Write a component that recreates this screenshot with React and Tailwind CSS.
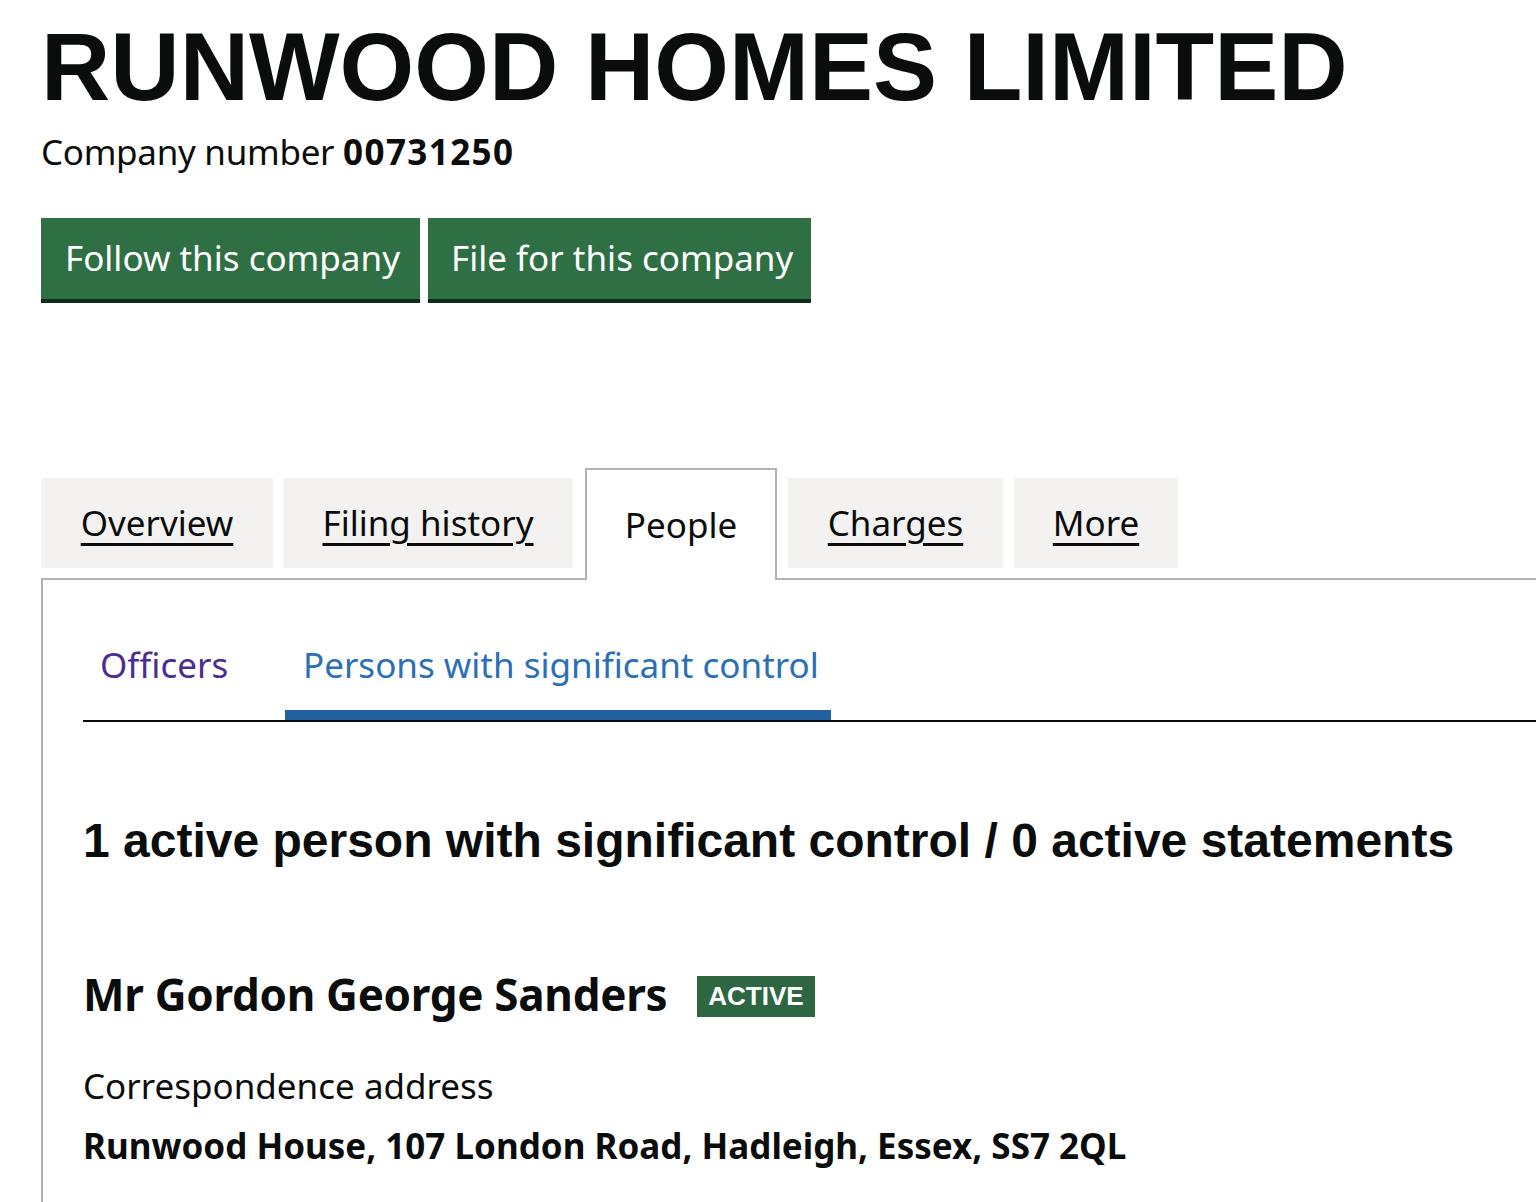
import React from "react";

const body = { fontFamily: '"Noto Sans", sans-serif' };
const arial = { fontFamily: '"Liberation Sans", Arial, sans-serif' };

const tabs = [
  { label: "Overview", w: "w-[232px]", ml: "ml-0" },
  { label: "Filing history", w: "w-[290px]", ml: "ml-[10px]" },
  { label: "People", w: "w-[192px]", ml: "ml-[12px]", active: true },
  { label: "Charges", w: "w-[215px]", ml: "ml-[11px]" },
  { label: "More", w: "w-[164px]", ml: "ml-[11px]" },
];

const Tab = ({ tab }) => {
  if (tab.active) {
    return (
      <div
        className={`relative z-10 -mb-[2px] flex h-[112px] items-center justify-center border-x-2 border-t-2 border-[#b1b4b6] bg-white ${tab.w} ${tab.ml}`}
      >
        <span className="text-[35px] leading-[48px] text-[#0b0c0c]">
          {tab.label}
        </span>
      </div>
    );
  }
  return (
    <div
      className={`mb-[10px] flex h-[90px] items-center justify-center bg-[#f3f2f1] ${tab.w} ${tab.ml}`}
    >
      <a
        href="#"
        className="text-[35px] leading-[48px] text-[#0b0c0c] underline decoration-[3px] underline-offset-[7px]"
      >
        {tab.label}
      </a>
    </div>
  );
};

export default function App() {
  return (
    <div
      className="flex h-[1202px] flex-col overflow-hidden bg-white pl-[41px] text-[#0b0c0c]"
      style={body}
    >
      <h1
        className="mt-[19px] text-[96px] font-bold leading-[96px] whitespace-nowrap"
        style={arial}
      >
        RUNWOOD HOMES LIMITED
      </h1>

      <p className="mt-[13px] text-[35px] leading-[48px] tracking-[-0.3px]">
        Company number{" "}
        <strong className="font-bold tracking-[1.4px]">00731250</strong>
      </p>

      <div className="mt-[42px] flex gap-[8px]">
        <button className="flex h-[81px] w-[379px] items-center pl-[24px] text-[35px] text-white bg-[#2f6f44] shadow-[0_4px_0_#0e2c19]">
          Follow this company
        </button>
        <button className="flex h-[81px] w-[383px] items-center pl-[23px] text-[35px] text-white bg-[#2f6f44] shadow-[0_4px_0_#0e2c19]">
          File for this company
        </button>
      </div>

      <div className="mt-[169px] flex items-end border-b-2 border-[#b1b4b6]">
        {tabs.map((tab) => (
          <Tab key={tab.label} tab={tab} />
        ))}
      </div>

      <div className="flex-1 border-l-2 border-[#b1b4b6] pl-[40px]">
        <div className="mt-[61px] flex border-b-2 border-[#0b0c0c]">
          <div className="w-[202px] pb-[31px] pl-[17px]">
            <a href="#" className="text-[35px] leading-[48px] text-[#4c2c92]">
              Officers
            </a>
          </div>
          <div className="w-[546px] border-b-[10px] border-[#23609f] pb-[21px] pl-[18px]">
            <a href="#" className="text-[35px] leading-[48px] text-[#2b6fb6]">
              Persons with significant control
            </a>
          </div>
        </div>

        <h2
          className="mt-[91px] text-[48px] font-bold leading-[56px] whitespace-nowrap"
          style={arial}
        >
          1 active person with significant control / 0 active statements
        </h2>

        <div className="mt-[97px] flex h-[56px] items-center">
          <h3 className="text-[44px] font-bold leading-[56px] tracking-[-0.3px]">
            Mr Gordon George Sanders
          </h3>
          <span
            className="ml-[30px] mt-[4px] flex h-[41px] items-center bg-[#2d6640] px-[11px] text-[26px] font-bold uppercase text-white"
            style={arial}
          >
            Active
          </span>
        </div>

        <p className="mt-[40px] text-[35px] leading-[48px]">
          Correspondence address
        </p>
        <p className="mt-[12px] text-[35px] font-bold leading-[48px]">
          Runwood House, 107 London Road, Hadleigh, Essex, SS7 2QL
        </p>
      </div>
    </div>
  );
}
